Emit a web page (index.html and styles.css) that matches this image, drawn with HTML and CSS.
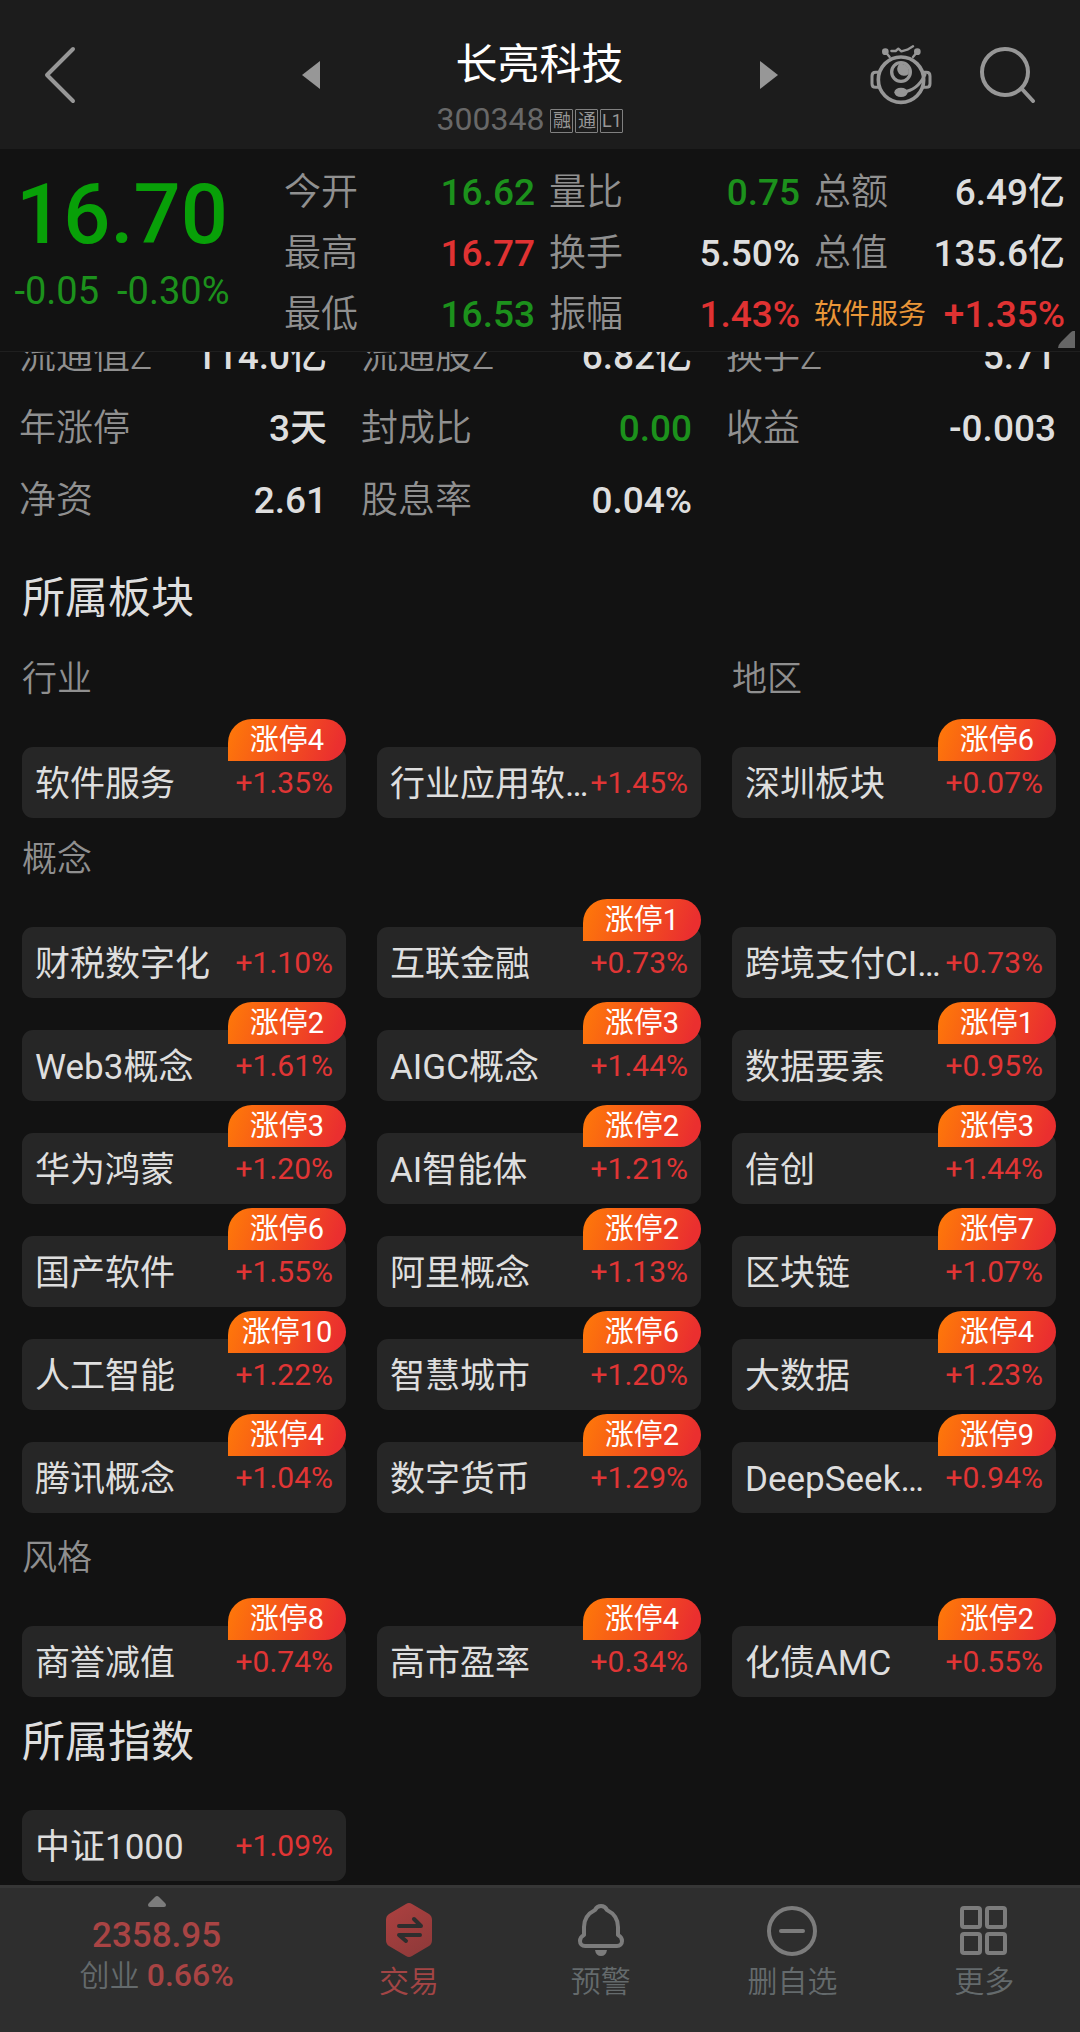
FILE: index.html
```html
<!DOCTYPE html>
<html lang="zh-CN">
<head>
<meta charset="utf-8">
<meta name="viewport" content="width=device-width, initial-scale=1">
<title>长亮科技 300348</title>
<link rel="stylesheet" href="styles.css">
</head>
<body>
<header class="topbar">
  <div class="topbar-side">
    <button class="icon-btn" type="button" aria-label="返回">
      <svg width="32" height="58" viewBox="0 0 32 58"><path d="M29 3 3 29 29 55" fill="none" stroke="currentColor" stroke-width="4" stroke-linecap="round" stroke-linejoin="round"/></svg>
    </button>
  </div>
  <div class="switcher">
    <button class="icon-btn" type="button" aria-label="上一只">
      <svg width="18" height="28" viewBox="0 0 18 28"><path d="M18 0v28L0 14z" fill="currentColor"/></svg>
    </button>
    <div class="stock">
      <h1 class="stock-name">长亮科技</h1>
      <p class="stock-code">300348<span class="tags"><span class="tag">融</span><span class="tag">通</span><span class="tag">L1</span></span></p>
    </div>
    <button class="icon-btn" type="button" aria-label="下一只">
      <svg width="18" height="28" viewBox="0 0 18 28"><path d="M0 0v28l18-14z" fill="currentColor"/></svg>
    </button>
  </div>
  <div class="topbar-side topbar-tools">
    <button class="icon-btn" type="button" aria-label="智能助手">
      <svg width="62" height="60" viewBox="55 44 186 180" fill="none" stroke="currentColor" stroke-width="11" stroke-linecap="round" stroke-linejoin="round">
        <circle cx="148" cy="148" r="68"/>
        <circle cx="148" cy="125" r="28" stroke-width="10"/>
        <path d="M143 101a20 20 0 0 0 28 30 24 24 0 0 0-28-30z" fill="currentColor" stroke="none"/>
        <ellipse cx="148" cy="186" rx="20" ry="14" fill="currentColor" stroke="none"/>
        <path d="M152 185c32-2 54-22 68-52" stroke-width="9"/>
        <path d="M80 126h-8q-11 0-11 11v23q0 11 11 11h8M216 126h8q11 0 11 11v23q0 11-11 11h-8" stroke-width="9"/>
        <path d="m101 64 13 16M197 64l-13 16" stroke-width="7"/>
        <circle cx="101" cy="64" r="10" fill="currentColor" stroke="none"/>
        <circle cx="197" cy="64" r="10" fill="currentColor" stroke="none"/>
        <path d="M119 62h13l8-7 9 8 18-5 17-10" stroke-width="7"/>
      </svg>
    </button>
    <button class="icon-btn" type="button" aria-label="搜索">
      <svg width="57" height="57" viewBox="0 0 57 57" fill="none" stroke="currentColor" stroke-width="4" stroke-linecap="round"><circle cx="26" cy="26" r="23"/><path d="m43 43 11 12"/></svg>
    </button>
  </div>
</header>

<section class="quote">
  <div class="price-box down">
    <div class="price">16.70</div>
    <div class="change"><span>-0.05</span><span>-0.30%</span></div>
  </div>
  <dl class="stats">
    <div class="stat"><dt>今开</dt><dd class="down">16.62</dd></div>
    <div class="stat"><dt>量比</dt><dd class="down">0.75</dd></div>
    <div class="stat"><dt>总额</dt><dd>6.49亿</dd></div>
    <div class="stat"><dt>最高</dt><dd class="up">16.77</dd></div>
    <div class="stat"><dt>换手</dt><dd>5.50%</dd></div>
    <div class="stat"><dt>总值</dt><dd>135.6亿</dd></div>
    <div class="stat"><dt>最低</dt><dd class="down">16.53</dd></div>
    <div class="stat"><dt>振幅</dt><dd class="up">1.43%</dd></div>
    <div class="stat"><dt class="sector">软件服务</dt><dd class="up">+1.35%</dd></div>
  </dl>
  <svg class="corner" width="17" height="17" viewBox="0 0 17 17"><path d="M17 2v15H0q0-3 3-6L12 2q3-3 5-2z" fill="currentColor"/></svg>
</section>

<main class="content">
  <dl class="details">
    <div class="stat"><dt>流通值Z</dt><dd>114.0亿</dd></div>
    <div class="stat"><dt>流通股Z</dt><dd>6.82亿</dd></div>
    <div class="stat"><dt>换手Z</dt><dd>5.71</dd></div>
    <div class="stat"><dt>年涨停</dt><dd>3天</dd></div>
    <div class="stat"><dt>封成比</dt><dd class="down">0.00</dd></div>
    <div class="stat"><dt>收益</dt><dd>-0.003</dd></div>
    <div class="stat"><dt>净资</dt><dd>2.61</dd></div>
    <div class="stat"><dt>股息率</dt><dd>0.04%</dd></div>
  </dl>

  <section class="block">
    <h2 class="block-title">所属板块</h2>
    <div class="group">
      <div class="group-heads"><h3 class="wide">行业</h3><h3>地区</h3></div>
      <div class="chips">
        <a class="chip" href="#"><span class="name">软件服务</span><span class="pct">+1.35%</span><span class="badge">涨停4</span></a>
        <a class="chip" href="#"><span class="name">行业应用软…</span><span class="pct">+1.45%</span></a>
        <a class="chip" href="#"><span class="name">深圳板块</span><span class="pct">+0.07%</span><span class="badge">涨停6</span></a>
      </div>
    </div>
    <div class="group">
      <div class="group-heads"><h3>概念</h3></div>
      <div class="chips">
        <a class="chip" href="#"><span class="name">财税数字化</span><span class="pct">+1.10%</span></a>
        <a class="chip" href="#"><span class="name">互联金融</span><span class="pct">+0.73%</span><span class="badge">涨停1</span></a>
        <a class="chip" href="#"><span class="name">跨境支付CI…</span><span class="pct">+0.73%</span></a>
        <a class="chip" href="#"><span class="name">Web3概念</span><span class="pct">+1.61%</span><span class="badge">涨停2</span></a>
        <a class="chip" href="#"><span class="name">AIGC概念</span><span class="pct">+1.44%</span><span class="badge">涨停3</span></a>
        <a class="chip" href="#"><span class="name">数据要素</span><span class="pct">+0.95%</span><span class="badge">涨停1</span></a>
        <a class="chip" href="#"><span class="name">华为鸿蒙</span><span class="pct">+1.20%</span><span class="badge">涨停3</span></a>
        <a class="chip" href="#"><span class="name">AI智能体</span><span class="pct">+1.21%</span><span class="badge">涨停2</span></a>
        <a class="chip" href="#"><span class="name">信创</span><span class="pct">+1.44%</span><span class="badge">涨停3</span></a>
        <a class="chip" href="#"><span class="name">国产软件</span><span class="pct">+1.55%</span><span class="badge">涨停6</span></a>
        <a class="chip" href="#"><span class="name">阿里概念</span><span class="pct">+1.13%</span><span class="badge">涨停2</span></a>
        <a class="chip" href="#"><span class="name">区块链</span><span class="pct">+1.07%</span><span class="badge">涨停7</span></a>
        <a class="chip" href="#"><span class="name">人工智能</span><span class="pct">+1.22%</span><span class="badge">涨停10</span></a>
        <a class="chip" href="#"><span class="name">智慧城市</span><span class="pct">+1.20%</span><span class="badge">涨停6</span></a>
        <a class="chip" href="#"><span class="name">大数据</span><span class="pct">+1.23%</span><span class="badge">涨停4</span></a>
        <a class="chip" href="#"><span class="name">腾讯概念</span><span class="pct">+1.04%</span><span class="badge">涨停4</span></a>
        <a class="chip" href="#"><span class="name">数字货币</span><span class="pct">+1.29%</span><span class="badge">涨停2</span></a>
        <a class="chip" href="#"><span class="name">DeepSeek…</span><span class="pct">+0.94%</span><span class="badge">涨停9</span></a>
      </div>
    </div>
    <div class="group group-style">
      <div class="group-heads"><h3>风格</h3></div>
      <div class="chips">
        <a class="chip" href="#"><span class="name">商誉减值</span><span class="pct">+0.74%</span><span class="badge">涨停8</span></a>
        <a class="chip" href="#"><span class="name">高市盈率</span><span class="pct">+0.34%</span><span class="badge">涨停4</span></a>
        <a class="chip" href="#"><span class="name">化债AMC</span><span class="pct">+0.55%</span><span class="badge">涨停2</span></a>
      </div>
    </div>
  </section>

  <section class="block block-index">
    <h2 class="block-title">所属指数</h2>
    <div class="chips">
      <a class="chip" href="#"><span class="name">中证1000</span><span class="pct">+1.09%</span></a>
    </div>
  </section>
</main>

<nav class="bottombar">
  <button class="market" type="button">
    <svg class="caret" width="18" height="11" viewBox="0 0 18 11"><path d="M9 0q1 0 2 1l6 6q1 1 1 2 0 2-2 2H2Q0 11 0 9q0-1 1-2l6-6q1-1 2-1z" fill="currentColor"/></svg>
    <span class="market-value">2358.95</span>
    <span class="market-line">创业 <span class="market-pct">0.66%</span></span>
  </button>
  <button class="tab tab-trade" type="button">
    <svg width="54" height="54" viewBox="0 0 54 54">
      <defs><linearGradient id="hex" x1="0" y1="0" x2="0.6" y2="1"><stop offset="0" stop-color="#ad4140"/><stop offset="1" stop-color="#913a3a"/></linearGradient></defs>
      <path d="M24 1q3-2 6 0l17 10q3 2 3 6v20q0 4-3 6L30 53q-3 2-6 0L7 43q-3-2-3-6V17q0-4 3-6z" fill="url(#hex)"/>
      <path d="M17 23h22l-7-7M38 32H17l7 6" fill="none" stroke="#2e2e2e" stroke-width="4" stroke-linecap="round" stroke-linejoin="round"/>
    </svg>
    <span>交易</span>
  </button>
  <button class="tab" type="button">
    <svg width="54" height="54" viewBox="0 0 54 54">
      <path d="M27 3c-4 0-5 2-6 4-6 3-11 9-11 17v8c-2 1-4 3-4 6 0 3 2 5 5 5h32c3 0 5-2 5-5 0-3-2-5-4-6v-8c0-8-5-14-11-17-1-2-2-4-6-4z" fill="none" stroke="currentColor" stroke-width="4" stroke-linejoin="round"/>
      <path d="M21 47h12q-1 6-6 6t-6-6z" fill="currentColor"/>
    </svg>
    <span>预警</span>
  </button>
  <button class="tab" type="button">
    <svg width="54" height="54" viewBox="0 0 54 54" fill="none" stroke="currentColor" stroke-width="4" stroke-linecap="round"><circle cx="27" cy="28" r="23"/><path d="M16 28h22"/></svg>
    <span>删自选</span>
  </button>
  <button class="tab" type="button">
    <svg width="54" height="54" viewBox="0 0 54 54" fill="none" stroke="currentColor" stroke-width="4"><rect x="5" y="5" width="18" height="19" rx="2"/><rect x="30" y="5" width="18" height="19" rx="2"/><rect x="5" y="31" width="18" height="19" rx="2"/><rect x="30" y="31" width="18" height="19" rx="2"/></svg>
    <span>更多</span>
  </button>
</nav>
</body>
</html>
```
FILE: styles.css
```css
* { box-sizing: border-box; }

body {
  margin: 0;
  min-height: 100vh;
  display: flex;
  flex-direction: column;
  background: #121212;
  color: #dedede;
  font-family: Roboto, "Noto Sans CJK SC", sans-serif;
}

h1, h2, h3, p, dl, dt, dd { margin: 0; font-weight: 400; }
svg { display: block; flex: none; }
button { border: 0; padding: 0; background: none; font: inherit; color: inherit; }
a { color: inherit; text-decoration: none; }

.up { color: #e03232; }
.down { color: #1c911c; }

/* Title bar */
.topbar {
  display: flex;
  align-items: center;
  min-height: 149px;
  padding: 0 44px;
  background: #1c1c1c;
}
.topbar-side { flex: 1; display: flex; }
.topbar-tools { justify-content: flex-end; gap: 47px; }
.icon-btn { color: #979797; }
.switcher {
  flex: none;
  width: 48%;
  display: flex;
  align-items: center;
  justify-content: space-between;
}
.stock { padding: 28px 20px 0 0; text-align: right; }
.stock-name { font-size: 42px; line-height: 52px; color: #fff; }
.stock-code {
  display: flex;
  align-items: center;
  justify-content: flex-end;
  gap: 6px;
  margin-top: 8px;
  font-size: 32px;
  line-height: 40px;
  color: #686868;
}
.tags { display: flex; gap: 2px; padding-top: 4px; }
.tag {
  width: 23px;
  height: 24px;
  border: 1px solid #808080;
  border-radius: 1px;
  font-size: 18px;
  line-height: 22px;
  text-align: center;
  color: #979797;
}

/* Quote summary */
.quote {
  position: relative;
  display: flex;
  gap: 40px;
  padding: 13px 15px 6px 0;
  border-bottom: 1px solid #1f1f1f;
}
.price-box { width: 244px; padding-top: 13px; text-align: center; }
.price { font-size: 83px; line-height: 80px; font-weight: 500; color: #08a008; }
.change {
  display: flex;
  justify-content: center;
  gap: 18px;
  margin-top: 16px;
  font-size: 38px;
  line-height: 40px;
}
.stats { flex: 1; display: grid; grid-template-columns: repeat(3, 1fr); column-gap: 14px; }
.stat { display: flex; justify-content: space-between; font-size: 37px; line-height: 61px; }
.stat dt { color: #909090; font-weight: 350; }
.stat dd { font-weight: 500; }
.stat .sector { font-size: 28px; font-weight: 400; color: #ea9638; }
.corner { position: absolute; right: 5px; bottom: 3px; color: #666; }

/* Scrolled list */
.content { flex: 1; overflow: hidden; padding: 0 24px 4px 22px; }
.details {
  display: grid;
  grid-template-columns: 308fr 331fr 330fr;
  column-gap: 34px;
  margin: -31px 0 31px -3px;
}
.details .stat { line-height: 72px; }

.block-title { font-size: 43px; line-height: 60px; }
.group-heads {
  display: grid;
  grid-template-columns: repeat(3, 1fr);
  column-gap: 31px;
  padding-top: 2px;
  line-height: 50px;
  color: #8f8f8f;
}
.group-heads h3 { font-size: 35px; font-weight: 350; }
.group-heads .wide { grid-column: span 2; }
.group { margin-top: 15px; }
.block-title + .group { margin-top: 25px; }
.group-style { margin-top: 19px; }
.block-index { margin-top: 15px; }

.chips { display: grid; grid-template-columns: repeat(3, 1fr); gap: 32px 31px; }
.group-heads + .chips { margin-top: 42px; }
.block-title + .chips { margin-top: 38px; }
.chip {
  position: relative;
  display: flex;
  align-items: center;
  justify-content: space-between;
  min-width: 0;
  height: 71px;
  padding: 0 13px;
  border-radius: 11px;
  background: #262626;
}
.name {
  min-width: 0;
  padding-top: 4px;
  overflow: hidden;
  white-space: nowrap;
  text-overflow: ellipsis;
  font-size: 35px;
  line-height: 50px;
}
.pct { flex: none; font-size: 30px; line-height: 50px; color: #e03535; }
.badge {
  position: absolute;
  right: 0;
  top: -28px;
  width: 118px;
  height: 42px;
  border-radius: 24px 21px 21px 0;
  background: linear-gradient(110deg, #ff7a08, #ea2f2f 90%);
  color: #fff;
  font-size: 29px;
  line-height: 42px;
  text-align: center;
}

/* Bottom bar */
.bottombar {
  position: sticky;
  bottom: 0;
  z-index: 1;
  display: flex;
  align-items: flex-start;
  min-height: 147px;
  border-top: 3px solid #363636;
  background: #2e2e2e;
  color: #7c7c7c;
}
.market {
  width: 29%;
  display: flex;
  flex-direction: column;
  align-items: center;
  padding-top: 8px;
}
.market-value { margin-top: 9px; font-size: 35px; line-height: 40px; font-weight: 500; color: #a94444; }
.market-line { font-size: 30px; line-height: 38px; font-weight: 350; color: #646a6c; }
.market-pct { font-size: 32px; font-weight: 500; color: #a94444; }
.tab {
  flex: 1;
  display: flex;
  flex-direction: column;
  align-items: center;
  gap: 5px;
  padding-top: 15px;
}
.tab span { font-size: 30px; line-height: 40px; font-weight: 350; color: #646a6c; }
.tab-trade span { color: #a34545; }
```
